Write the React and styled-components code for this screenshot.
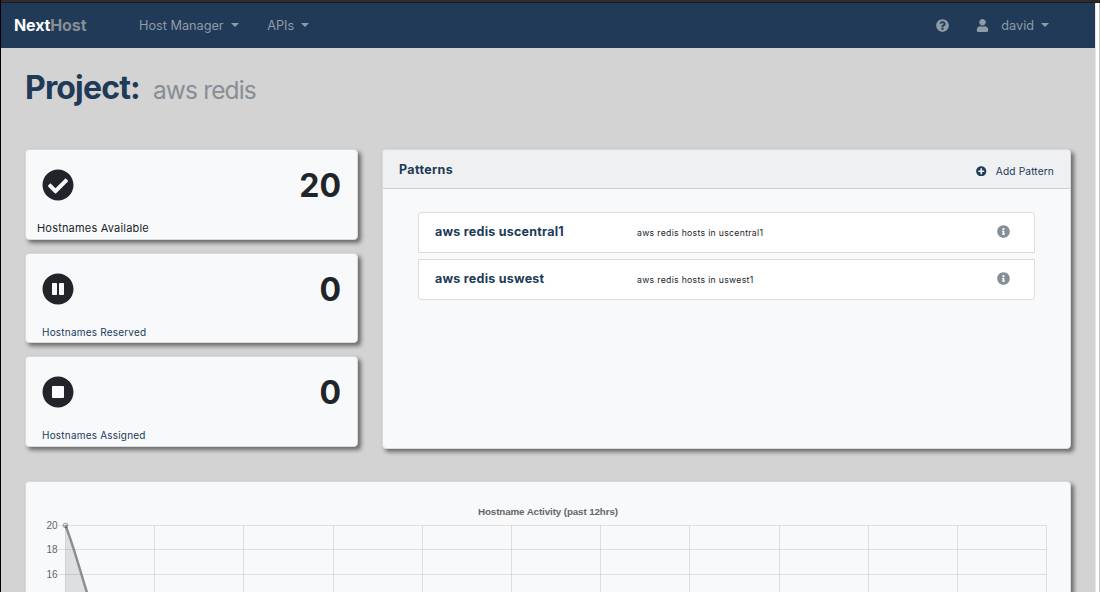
import React from "react";
import styled, { createGlobalStyle } from "styled-components";
import {
  FaCheckCircle,
  FaPauseCircle,
  FaStopCircle,
  FaPlusCircle,
  FaInfoCircle,
  FaQuestionCircle,
  FaUser,
} from "react-icons/fa";

const GlobalStyle = createGlobalStyle`
  * { box-sizing: border-box; }
  body {
    margin: 0;
    background: #d3d3d3;
    font-family: Inter, "Liberation Sans", sans-serif;
    color: #212529;
    overflow: hidden;
  }
  svg { display: block; flex: none; }
`;

const Window = styled.div`
  height: 592px;
  display: flex;
  flex-direction: column;
  border-left: 1px solid #000;
  overflow: hidden;
`;

const TitleStrip = styled.div`
  flex: none;
  height: 3px;
  background: #2d2d2d;
  border-bottom: 1px solid #1c1c1c;
  margin-left: -1px;
`;

const Viewport = styled.div`
  flex: 1;
  min-height: 0;
  display: flex;
`;

const Page = styled.main`
  flex: 1;
  min-width: 0;
  background: #d3d3d3;
`;

const Scrollbar = styled.div`
  width: 5px;
  background: #fff;
  border-left: 1px solid #e6e6e6;
  border-right: 1px solid #c4c4c4;
`;

const Navbar = styled.nav`
  height: 45px;
  display: flex;
  align-items: center;
  padding: 0 46px 1px 13px;
  background: #203a57;
  color: #909ba8;
  font-size: 12.7px;
  letter-spacing: 0;
`;

const Brand = styled.div`
  width: 125px;
  color: #fff;
  font-size: 16px;
  font-weight: 700;
  letter-spacing: -0.13px;
  span { color: #868e96; }
`;

const NavItem = styled.div`
  display: flex;
  align-items: center;
  margin-right: ${(p) => p.$gap || 0}px;
  white-space: nowrap;
`;

const Caret = styled.i`
  margin-left: 7px;
  border: 4px solid transparent;
  border-top-color: currentColor;
  border-bottom: 0;
`;

const Spacer = styled.div`
  flex: 1;
`;

const Content = styled.div`
  padding: 0 24px;
`;

const Heading = styled.h1`
  display: flex;
  align-items: baseline;
  height: 101px;
  margin: 0;
  padding-top: 20.5px;
  line-height: 38px;
  font-size: 32px;
  font-weight: 700;
  letter-spacing: -0.83px;
  color: #203a57;
`;

const ProjectName = styled.small`
  margin-left: 13px;
  font-size: 24.5px;
  font-weight: 400;
  letter-spacing: -0.85px;
  color: #868e96;
`;

const Columns = styled.div`
  display: flex;
  gap: 24px;
`;

const Card = styled.section`
  background: #f8f9fb;
  border: 1px solid #d9dadc;
  border-radius: 4px;
  box-shadow: 3px 3px 4px rgba(0, 0, 0, 0.5);
`;

const Stats = styled.div`
  display: flex;
  flex-direction: column;
  width: 333px;
  gap: 13px;
`;

const StatCard = styled(Card)`
  height: ${(p) => p.$height}px;
  padding: 18px 16px 0 16px;
`;

const StatTop = styled.div`
  display: flex;
  justify-content: space-between;
  align-items: center;
  height: 34px;
`;

const StatValue = styled.div`
  padding-top: 2px;
  font-size: 32px;
  line-height: 34px;
  font-weight: 700;
`;

const StatLabel = styled.div`
  margin: ${(p) => (p.$primary ? "18px 0 0 -5px" : "17.5px 0 0")};
  line-height: 16px;
  font-size: ${(p) => (p.$primary ? 11 : 10)}px;
  letter-spacing: ${(p) => (p.$primary ? 0.19 : 0.2)}px;
  color: ${(p) => (p.$primary ? "#212529" : "#203a57")};
`;

const Patterns = styled(Card)`
  flex: none;
  width: 689px;
  height: 300px;
`;

const PatternsHeader = styled.header`
  display: flex;
  align-items: center;
  justify-content: space-between;
  height: 39px;
  padding: 0 16px 0 16px;
  background: #eff0f2;
  border-bottom: 1px solid #ced0d3;
  border-radius: 3px 3px 0 0;
  color: #203a57;
  font-size: 12.5px;
  font-weight: 700;
  letter-spacing: 0.35px;
`;

const AddPattern = styled.div`
  display: flex;
  align-items: center;
  gap: 9px;
  padding-top: 4px;
  font-size: 10.2px;
  font-weight: 400;
  letter-spacing: 0.12px;
`;

const PatternList = styled.div`
  display: flex;
  flex-direction: column;
  gap: 6px;
  padding: 23px 35px 0;
`;

const PatternRow = styled.div`
  display: flex;
  align-items: center;
  height: 41px;
  padding: 0 24px 2px 16px;
  background: #fff;
  border: 1px solid #dcdddf;
  &:first-child { border-radius: 3px 3px 0 0; }
  &:last-child { border-radius: 0 0 3px 3px; }
  svg { color: #868e96; }
`;

const PatternName = styled.div`
  width: 202px;
  padding-bottom: 1px;
  font-size: 12.5px;
  font-weight: 700;
  letter-spacing: 0.24px;
  color: #203a57;
`;

const PatternNote = styled.div`
  flex: 1;
  padding-top: 3px;
  font-size: 8.7px;
  letter-spacing: 0.3px;
`;

const ChartCard = styled(Card)`
  width: 1046px;
  height: 330px;
  margin-top: 32px;
`;

const Activity = styled.svg`
  font-family: "Liberation Sans", Arial, sans-serif;
  font-size: 10px;
  fill: #666;
`;

const columnsX = [39.5, 128.5, 217.5, 307.5, 396.5, 485.5, 574.5, 663.5, 753.5, 842.5, 931.5, 1020.5];
const ticks = [
  { value: 20, y: 43.5 },
  { value: 18, y: 67.5 },
  { value: 16, y: 92.5 },
];

const stats = [
  { icon: FaCheckCircle, value: 20, label: "Hostnames Available", height: 91, primary: true },
  { icon: FaPauseCircle, value: 0, label: "Hostnames Reserved", height: 90 },
  { icon: FaStopCircle, value: 0, label: "Hostnames Assigned", height: 91 },
];

const patterns = [
  { name: "aws redis uscentral1", note: "aws redis hosts in uscentral1" },
  { name: "aws redis uswest", note: "aws redis hosts in uswest1" },
];

function ActivityChart() {
  return (
    <Activity width="1044" height="328">
      <text x="522" y="33" textAnchor="middle" fontWeight="700" fontSize="9.8" textLength="140">
        Hostname Activity (past 12hrs)
      </text>
      <g stroke="#000" strokeOpacity="0.1">
        {columnsX.map((x) => (
          <line key={x} x1={x} x2={x} y1="43.5" y2="328" />
        ))}
        {ticks.map(({ y }) => (
          <line key={y} x1="32" x2="1020.5" y1={y} y2={y} />
        ))}
      </g>
      {ticks.map(({ value, y }) => (
        <text key={value} x="31.5" y={y + 3.5} textAnchor="end" textLength="11">
          {value}
        </text>
      ))}
      <path d="M39.5 43.5 C48 65 54 89 63 117 L63 328 H39.5 Z" fill="#000" fillOpacity="0.1" />
      <path d="M39.5 43.5 C48 65 54 89 63 117" fill="none" stroke="#868e96" strokeWidth="2.4" />
      <circle cx="39.5" cy="43.5" r="2.4" fill="#000" fillOpacity="0.1" stroke="#000" strokeOpacity="0.3" />
    </Activity>
  );
}

export default function App() {
  return (
    <Window>
      <GlobalStyle />
      <TitleStrip />
      <Viewport>
        <Page>
          <Navbar>
            <Brand>Next<span>Host</span></Brand>
            <NavItem $gap={28.5}>Host Manager<Caret /></NavItem>
            <NavItem>APIs<Caret /></NavItem>
            <Spacer />
            <NavItem $gap={27.5}><FaQuestionCircle size={13} /></NavItem>
            <NavItem $gap={12}><FaUser size={13} /></NavItem>
            <NavItem>david<Caret /></NavItem>
          </Navbar>
          <Content>
            <Heading>Project:<ProjectName>aws redis</ProjectName></Heading>
            <Columns>
              <Stats>
                {stats.map(({ icon: Icon, value, label, height, primary }) => (
                  <StatCard key={label} $height={height}>
                    <StatTop>
                      <Icon size={32} />
                      <StatValue>{value}</StatValue>
                    </StatTop>
                    <StatLabel $primary={primary}>{label}</StatLabel>
                  </StatCard>
                ))}
              </Stats>
              <Patterns>
                <PatternsHeader>
                  Patterns
                  <AddPattern><FaPlusCircle size={10.5} />Add Pattern</AddPattern>
                </PatternsHeader>
                <PatternList>
                  {patterns.map(({ name, note }) => (
                    <PatternRow key={name}>
                      <PatternName>{name}</PatternName>
                      <PatternNote>{note}</PatternNote>
                      <FaInfoCircle size={13} />
                    </PatternRow>
                  ))}
                </PatternList>
              </Patterns>
            </Columns>
            <ChartCard><ActivityChart /></ChartCard>
          </Content>
        </Page>
        <Scrollbar />
      </Viewport>
    </Window>
  );
}
